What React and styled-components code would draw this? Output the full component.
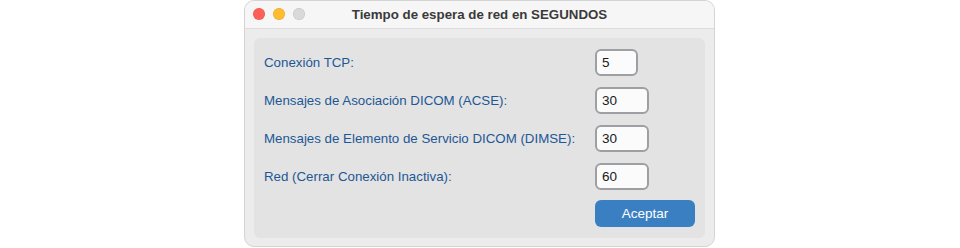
import React from 'react'
import styled, { createGlobalStyle } from 'styled-components'

const GlobalStyle = createGlobalStyle`
    html, body {
        margin: 0;
        padding: 0;
        background: #ffffff;
    }
    body {
        font-family: "Liberation Sans", Arial, sans-serif;
    }
`

const Page = styled.div`
    display: flex;
    justify-content: center;
    width: 960px;
    height: 248px;
    padding-right: 1px;
    box-sizing: border-box;
`

const Window = styled.div`
    width: 471px;
    height: 247px;
    box-sizing: border-box;
    background: #ececec;
    border: 1px solid #d4d4d4;
    border-radius: 10px;
    overflow: hidden;
    display: flex;
    flex-direction: column;
`

const TitleBar = styled.div`
    position: relative;
    height: 27px;
    flex-shrink: 0;
    display: flex;
    align-items: center;
    justify-content: center;
    background: #f6f6f6;
    border-bottom: 1px solid #dcdcdc;
`

const Lights = styled.div`
    position: absolute;
    left: 8px;
    top: 7px;
    display: flex;
    gap: 8px;
`

const Light = styled.span`
    width: 12px;
    height: 12px;
    border-radius: 50%;
    background: ${p => p.$color};
    box-shadow: inset 0 0 0 0.5px rgba(0, 0, 0, 0.12);
`

const Title = styled.div`
    font-size: 13.3px;
    font-weight: bold;
    color: #3a3a3a;
`

const Body = styled.div`
    flex: 1;
    padding: 9px 10px 8px 9px;
    display: flex;
`

const Panel = styled.div`
    flex: 1;
    background: #e3e3e3;
    border-radius: 6px;
    padding: 5px 10px 10px 10px;
    display: flex;
    flex-direction: column;
`

const Row = styled.div`
    display: grid;
    grid-template-columns: 331px auto;
    align-items: center;
    height: 38px;
`

const Label = styled.label`
    font-size: 13.3px;
    color: #1d5795;
`

const Field = styled.input`
    width: ${p => p.$w}px;
    height: 27px;
    box-sizing: border-box;
    border: 2px solid #9d9fa2;
    border-radius: 6px;
    background: #fbfbfb;
    font-family: "Liberation Sans", Arial, sans-serif;
    font-size: 13.5px;
    color: #1a1a1a;
    padding: 0 0 0 5px;
    outline: none;
`

const Footer = styled.div`
    display: flex;
    padding-left: 331px;
    margin-top: 5px;
`

const Button = styled.button`
    width: 100px;
    height: 27px;
    border: none;
    border-radius: 6px;
    background: #3b7fc3;
    color: #ffffff;
    font-family: "Liberation Sans", Arial, sans-serif;
    font-size: 13.5px;
`

const rows = [
    { label: 'Conexión TCP:', value: '5', w: 43 },
    { label: 'Mensajes de Asociación DICOM (ACSE):', value: '30', w: 54 },
    { label: 'Mensajes de Elemento de Servicio DICOM (DIMSE):', value: '30', w: 54 },
    { label: 'Red (Cerrar Conexión Inactiva):', value: '60', w: 54 },
]

export default function App() {
    return (
        <Page>
            <GlobalStyle />
            <Window>
                <TitleBar>
                    <Lights>
                        <Light $color="#fe5f57" />
                        <Light $color="#febc2e" />
                        <Light $color="#d9d9d9" />
                    </Lights>
                    <Title>Tiempo de espera de red en SEGUNDOS</Title>
                </TitleBar>
                <Body>
                    <Panel>
                        {rows.map(r => (
                            <Row key={r.label}>
                                <Label>{r.label}</Label>
                                <Field $w={r.w} defaultValue={r.value} />
                            </Row>
                        ))}
                        <Footer>
                            <Button>Aceptar</Button>
                        </Footer>
                    </Panel>
                </Body>
            </Window>
        </Page>
    )
}
